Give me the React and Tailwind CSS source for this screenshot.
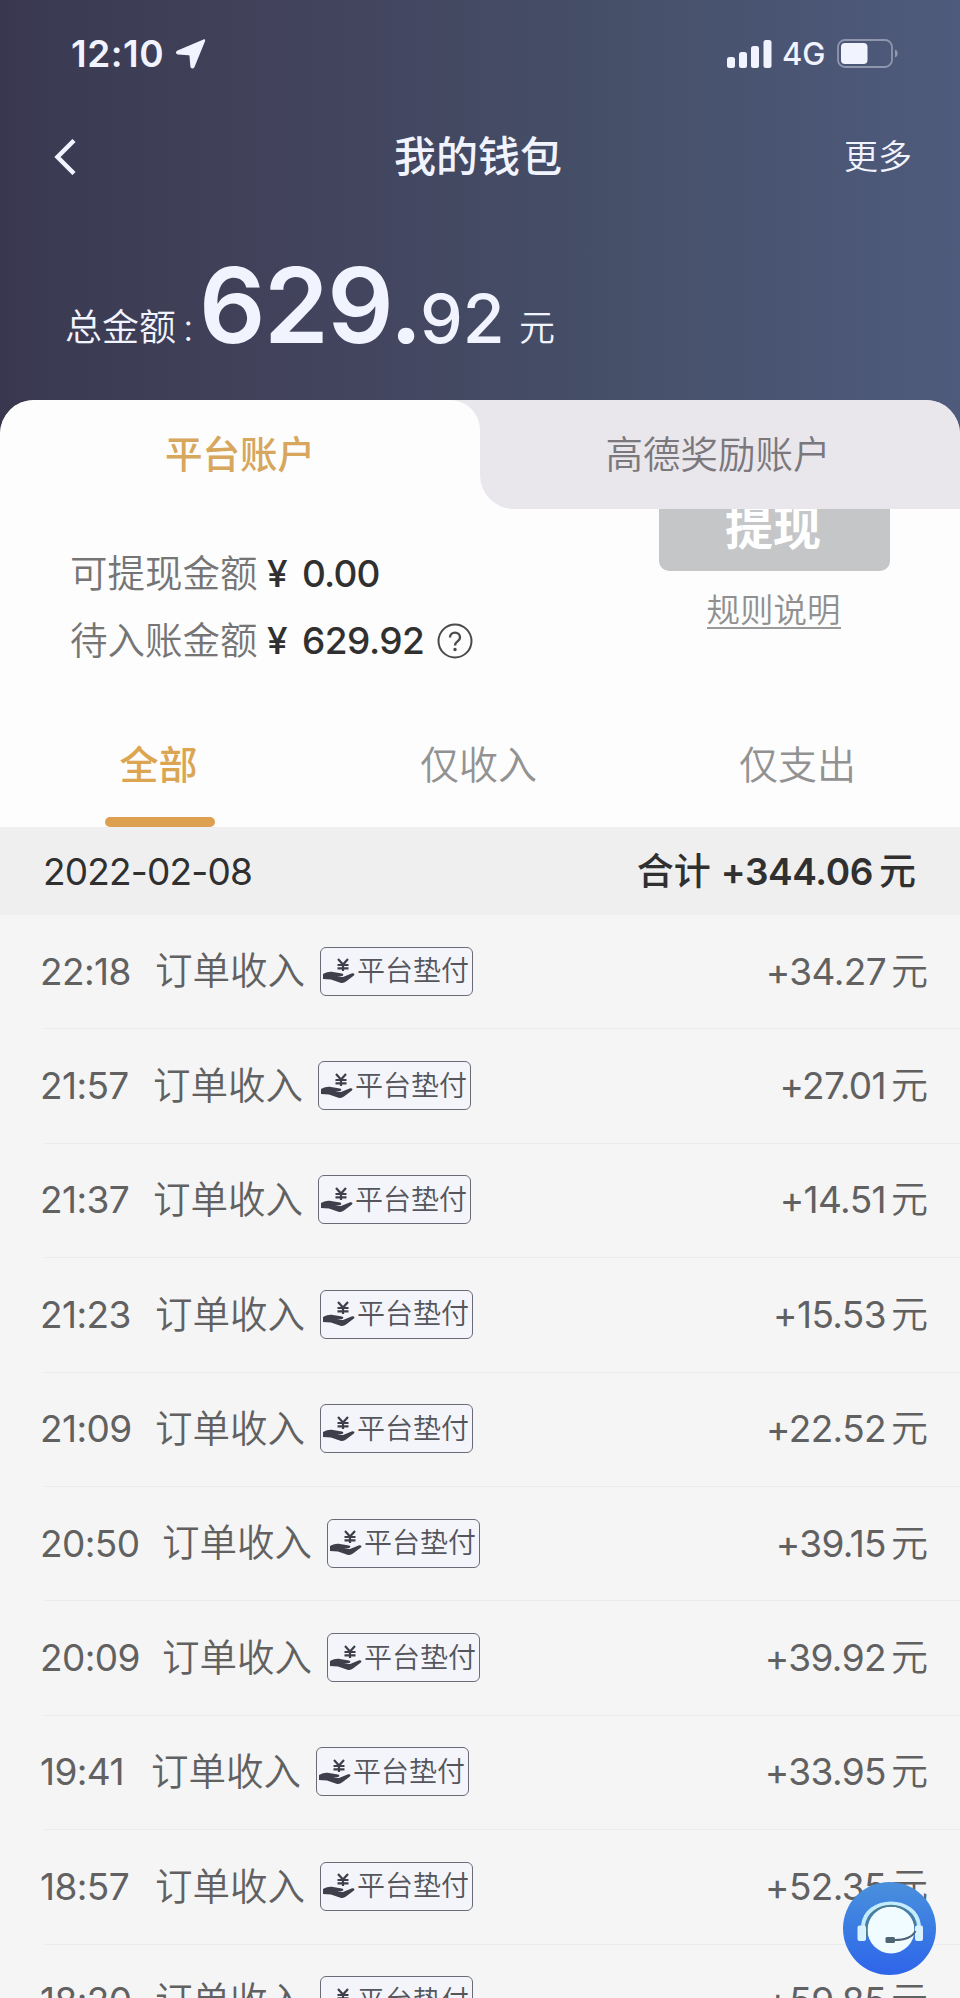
import React from 'react';

const records = [
  { time: '22:18', amount: '+34.27', labelGap: 'w-[115px]' },
  { time: '21:57', amount: '+27.01', labelGap: 'w-[113px]' },
  { time: '21:37', amount: '+14.51', labelGap: 'w-[113px]' },
  { time: '21:23', amount: '+15.53', labelGap: 'w-[115px]' },
  { time: '21:09', amount: '+22.52', labelGap: 'w-[115px]' },
  { time: '20:50', amount: '+39.15', labelGap: 'w-[122px]' },
  { time: '20:09', amount: '+39.92', labelGap: 'w-[122px]' },
  { time: '19:41', amount: '+33.95', labelGap: 'w-[111px]' },
  { time: '18:57', amount: '+52.35', labelGap: 'w-[115px]' },
  { time: '18:20', amount: '+59.85', labelGap: 'w-[115px]' },
];

const HandIcon = () => (
  <svg width="33" height="26" viewBox="0 0 33 26" className="shrink-0">
    <path d="M15 1l5 5.500 5-5.500M20 6.500V13M14.500 7h11M14.500 10.300h11" fill="none" stroke="#3f3f4b" strokeWidth="2.200" />
    <path
      d="M0 16c4-2.200 7-2.700 10-2.100l9 1.700c1.800.4 1.800 2.100.2 2.300l-5 .5 5.800.6 8.500-3.500c2.200-.7 4 .4 2.400 2L23 23.600c-1.800 1.300-3.600 1.600-5.600 1.100L8 21.600 0 21z"
      fill="#3f3f4b"
    />
  </svg>
);

const StatusBar = () => (
  <div className="flex h-[107px] items-center pl-[71px] pr-[61px]">
    <span className="w-[105px] text-[37px] font-semibold leading-none tracking-[0.5px]">12:10</span>
    <svg width="30" height="30" viewBox="0 0 30 30">
      <path d="M27.500 0.500c1.200-.5 2 .4 1.500 1.700L18.500 28c-.9 2.200-3.900 1.900-4.100-.5L13.500 17.200c0-.6-.4-1-1-1L2 15.500c-2.400-.2-2.700-3.100-.5-4.100z" fill="currentColor" />
    </svg>
    <svg width="45" height="28" viewBox="0 0 45 28" className="ml-auto" fill="currentColor">
      <rect x="0" y="17" width="8" height="11" rx="2.500" />
      <rect x="12" y="12" width="8" height="16" rx="2.500" />
      <rect x="24" y="6" width="8" height="22" rx="2.500" />
      <rect x="36.500" y="0" width="8" height="28" rx="2.500" />
    </svg>
    <span className="ml-[10px] w-[55px] text-[31px] font-medium leading-none">4G</span>
    <svg width="62" height="29" viewBox="0 0 62 29">
      <rect x="1" y="1" width="54" height="27" rx="7" fill="none" stroke="#9096ad" strokeWidth="1.800" />
      <rect x="4" y="4" width="26.500" height="21" rx="4" fill="currentColor" />
      <path d="M58 10.500c3.600 1.200 3.600 6.800 0 8z" fill="#9096ad" />
    </svg>
  </div>
);

const RecordRow = ({ time, amount, labelGap }) => (
  <div className="flex h-[114.4px] shrink-0 items-center pb-[2px] pl-[40px] pr-[32px] text-[#616161]">
    <span className={`${labelGap} text-[37px] font-normal leading-none tracking-[-0.6px]`}>{time}</span>
    <span className="w-[165px] text-[37.5px] leading-none">订单收入</span>
    <div className="flex h-[49px] w-[153px] items-center rounded-[6px] border border-[#6b6b78] bg-[#f4f5fa] pl-[2px]">
      <HandIcon />
      <span className="ml-px whitespace-nowrap text-[28px] leading-none text-[#55555c]">平台垫付</span>
    </div>
    <span className="ml-auto text-[37px] font-normal leading-none tracking-[-0.6px]">{amount}</span>
    <span className="ml-[5px] text-[37px] leading-none">元</span>
  </div>
);

const App = () => {
  return (
    <div
      lang="zh-CN"
      className="relative flex h-[1998px] w-[960px] flex-col overflow-hidden bg-[#fdfdfd] font-['Inter','Noto_Sans_CJK_SC',sans-serif] font-[350]"
    >
      {/* Header */}
      <div className="bg-[linear-gradient(90deg,#39374f_0%,#3b3b53_6%,#42425c_30%,#465069_65%,#4b5675_85%,#4f5b7c_100%)] text-[#f1f3fe]">
        <StatusBar />
        <div className="flex h-[100px] items-center justify-between pl-[53px] pr-[48px]">
          <svg width="59" height="36" viewBox="0 0 59 36" fill="none">
            <path d="M21 1.500L4.500 18 21 34.500" stroke="currentColor" strokeWidth="4.500" />
          </svg>
          <h1 className="text-[42px] font-medium leading-none">我的钱包</h1>
          <span className="text-[34px] leading-none">更多</span>
        </div>
        <div className="flex h-[193px] items-baseline pl-[65px] pt-[46px] leading-none">
          <span className="w-[118px] -translate-y-[2px] whitespace-nowrap text-[37px]">总金额</span>
          <span className="w-[16px] -translate-y-[2px] text-[37px]">:</span>
          <span className="w-[221px] text-[104px] font-semibold leading-none tracking-[-1.5px]">629.</span>
          <span className="w-[99px] text-[68px] font-medium leading-none">92</span>
          <span className="-translate-y-[2px] text-[36px]">元</span>
        </div>
      </div>

      {/* Account tabs, the strip behind them continues the header */}
      <div className="bg-[linear-gradient(90deg,#39374f_0%,#42425c_30%,#4f5b7c_100%)]">
        <div className="grid h-[109px] grid-cols-2 overflow-hidden rounded-t-[34px]">
          <div className="bg-[#e8e7eb]">
            <div className="flex h-full items-center justify-center rounded-tr-[30px] bg-[#fdfdfd] text-[37.5px] font-medium leading-none text-[#d6a75c]">
              平台账户
            </div>
          </div>
          <div className="bg-[#fdfdfd]">
            <div className="flex h-full items-center justify-center rounded-bl-[34px] bg-[#e9e7eb] pr-[4px] text-[37.5px] leading-none text-[#7b787d]">
              高德奖励账户
            </div>
          </div>
        </div>
      </div>

      {/* Balance */}
      <div className="flex h-[201px] justify-between pl-[70px] pr-[70px]">
        <div className="pt-[31px] text-[37px] font-medium leading-none text-[#303030]">
          <div className="flex h-[67px] items-center">
            <span className="w-[197px] whitespace-nowrap text-[37.5px] font-[350] text-[#757575]">可提现金额</span>
            <span className="w-[35px]">¥</span>
            <span className="tracking-[-0.8px]">0.00</span>
          </div>
          <div className="flex h-[67px] items-center">
            <span className="w-[197px] whitespace-nowrap text-[37.5px] font-[350] text-[#757575]">待入账金额</span>
            <span className="w-[35px]">¥</span>
            <span className="w-[135px] tracking-[-0.5px]">629.92</span>
            <svg width="36" height="36" viewBox="0 0 36 36" fill="none" stroke="#4a4a4a">
              <circle cx="18" cy="18" r="16.500" strokeWidth="2" />
              <path d="M13 14.500c0-6.500 10-6.500 10 0 0 4-5 3.800-5 8" strokeWidth="2.400" />
              <circle cx="18" cy="26.500" r="1" strokeWidth="1.500" fill="#4a4a4a" />
            </svg>
          </div>
        </div>
        <div className="flex w-[231px] flex-col items-center">
          <div className="flex h-[62px] w-full justify-center overflow-hidden rounded-b-[10px] bg-[#c4c6c8] pr-[3px]">
            <span className="-mt-[5px] text-[48px] font-bold leading-none text-white">提现</span>
          </div>
          <a className="mt-[22px] mr-[2px] border-b-2 border-[#999] text-[33.5px] leading-[34px] text-[#909090]">规则说明</a>
        </div>
      </div>

      {/* Filters */}
      <div className="flex h-[117px] text-[39px] leading-none text-[#929292]">
        <div className="flex w-[319px] flex-col items-center text-[#dba552]">
          <span className="pt-[35px] pr-[2px] font-medium">全部</span>
          <span className="mt-auto h-[10px] w-[110px] rounded-full bg-[#dd9f50]" />
        </div>
        <div className="w-[319px] pt-[35px] text-center">仅收入</div>
        <div className="w-[319px] pt-[35px] text-center">仅支出</div>
      </div>

      {/* Day summary */}
      <div className="flex h-[88px] shrink-0 items-center bg-[#efefef] pl-[43px] pr-[44px] text-[37px] leading-none text-[#303030]">
        <span className="font-normal tracking-[-0.8px]">2022-02-08</span>
        <span className="ml-auto font-medium">合计</span>
        <span className="ml-[10px] font-semibold tracking-[-0.4px]">+344.06</span>
        <span className="ml-[6px] font-medium">元</span>
      </div>

      {/* Records */}
      <div className="flex flex-1 flex-col overflow-hidden bg-[#f5f5f6]">
        {records.map((record) => (
          <React.Fragment key={record.time}>
            <RecordRow {...record} />
            <div className="-mt-px ml-[44px] h-px shrink-0 bg-[#ececed]" />
          </React.Fragment>
        ))}
      </div>

      {/* Customer service */}
      <button className="absolute bottom-[23px] right-[24px] h-[93px] w-[93px] rounded-full bg-linear-to-b from-[#4a90dc] to-[#2f64ea]">
        <svg width="93" height="93" viewBox="0 0 93 93" fill="none">
          <circle cx="48" cy="48" r="23.500" fill="#f0fcff" />
          <path d="M20 44C22 14 74 14 76 44" stroke="#c4ecff" strokeWidth="4" />
          <path d="M23.500 56V47C23.500 16 72.500 16 72.500 47V52" stroke="#4d7f8f" strokeWidth="2" />
          <rect x="14.500" y="43.500" width="8.500" height="15.500" rx="2" fill="#d8f3ff" />
          <rect x="72" y="43.500" width="8" height="15.500" rx="2" fill="#d8f3ff" />
          <path d="M72.500 49c-3 6-10 9-21 9" stroke="#4f6672" strokeWidth="2" />
          <rect x="42.500" y="55" width="9.500" height="6" rx="1.500" fill="#4f6672" />
        </svg>
      </button>
    </div>
  );
};

export default App;
